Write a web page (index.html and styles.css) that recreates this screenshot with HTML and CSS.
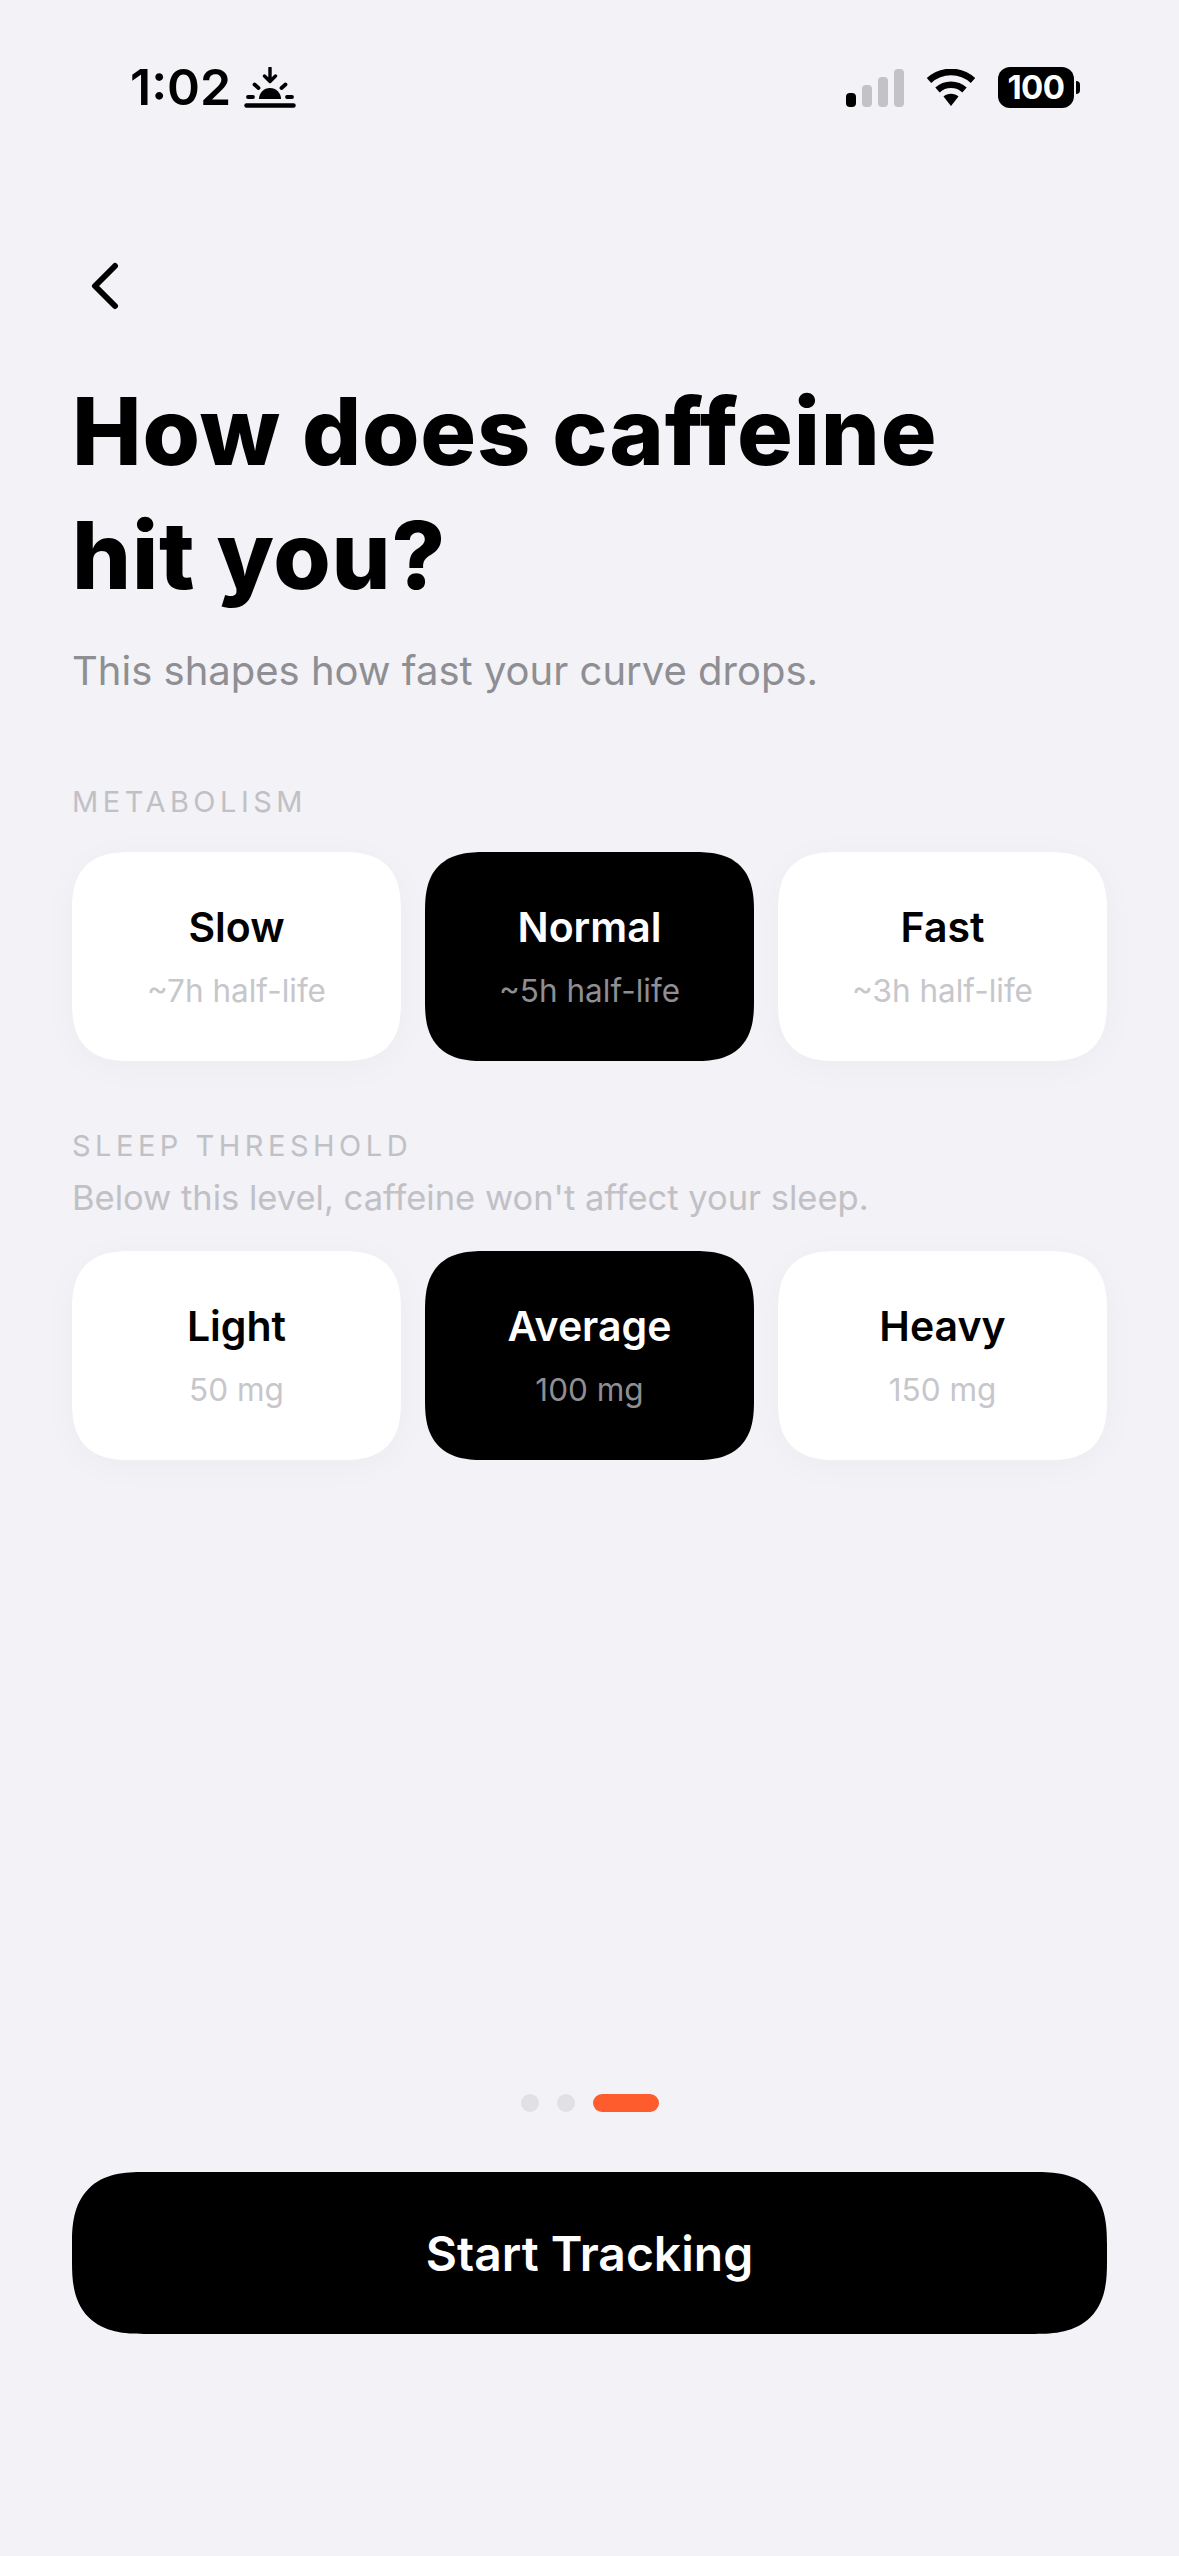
FILE: index.html
```html
<!DOCTYPE html>
<html lang="en">
<head>
<meta charset="utf-8">
<title>Caffeine setup</title>
<link rel="stylesheet" href="styles.css">
</head>
<body>
<main class="screen">
  <header class="status">
    <div class="status-left">
      <span class="time">1:02</span>
      <svg class="sunset" width="52" height="42" viewBox="0 0 52 42" aria-hidden="true">
        <path d="M26 1v13M20.500 9l5.500 5.500L31.500 9" fill="none" stroke="#000" stroke-width="3.400" stroke-linecap="round" stroke-linejoin="round"/>
        <path d="M15 32a11 11 0 0 1 22 0z" fill="#000"/>
        <path d="M10.500 17.500l4 3.500M41.500 17.500l-4 3.500M4 30h5M43 30h5" fill="none" stroke="#000" stroke-width="3.800" stroke-linecap="round"/>
        <path d="M2.500 38.500h47" fill="none" stroke="#000" stroke-width="4.500" stroke-linecap="round"/>
      </svg>
    </div>
    <div class="status-right">
      <svg width="58" height="38" viewBox="0 0 58 38" aria-hidden="true">
        <rect x="0" y="24" width="10" height="14" rx="4" fill="#000"/>
        <rect x="16" y="16" width="10" height="22" rx="4" fill="#c2c2c7"/>
        <rect x="32" y="8" width="10" height="30" rx="4" fill="#c2c2c7"/>
        <rect x="48" y="0" width="10" height="38" rx="4" fill="#c2c2c7"/>
      </svg>
      <svg class="wifi" width="50" height="37" viewBox="0 0 50 37" aria-hidden="true">
        <path d="M3 11.500C15.500 0 34.500 0 47 11.500" fill="none" stroke="#000" stroke-width="6.500"/>
        <path d="M11.500 21c7.500-7 19.500-7 27 0" fill="none" stroke="#000" stroke-width="6.500"/>
        <path d="M17.500 27.500c4-3.700 11-3.700 15 0L25 37z" fill="#000"/>
      </svg>
      <div class="battery">
        <span class="battery-body">100</span>
        <span class="battery-cap"></span>
      </div>
    </div>
  </header>

  <button class="back" aria-label="Back">
    <svg width="30" height="48" viewBox="0 0 30 48" aria-hidden="true">
      <path d="M25 4 5 24l20 20" fill="none" stroke="#000" stroke-width="6" stroke-linecap="round" stroke-linejoin="round"/>
    </svg>
  </button>

  <h1 class="title">How does caffeine<br>hit you?</h1>
  <p class="subtitle">This shapes how fast your curve drops.</p>

  <section class="group group-metabolism">
    <h2 class="label">METABOLISM</h2>
    <div class="options">
      <div class="card"><span class="card-name">Slow</span><span class="card-sub">~7h half-life</span></div>
      <div class="card selected"><span class="card-name">Normal</span><span class="card-sub">~5h half-life</span></div>
      <div class="card"><span class="card-name">Fast</span><span class="card-sub">~3h half-life</span></div>
    </div>
  </section>

  <section class="group group-sleep">
    <h2 class="label">SLEEP THRESHOLD</h2>
    <p class="hint">Below this level, caffeine won't affect your sleep.</p>
    <div class="options">
      <div class="card"><span class="card-name">Light</span><span class="card-sub">50 mg</span></div>
      <div class="card selected"><span class="card-name">Average</span><span class="card-sub">100 mg</span></div>
      <div class="card"><span class="card-name">Heavy</span><span class="card-sub">150 mg</span></div>
    </div>
  </section>

  <div class="spacer"></div>

  <div class="pager">
    <span class="dot"></span>
    <span class="dot"></span>
    <span class="dot active"></span>
  </div>

  <button class="cta">Start Tracking</button>
</main>
</body>
</html>
```

FILE: styles.css
```css
* { box-sizing: border-box; }

html, body {
  margin: 0;
  padding: 0;
  background: #f2f2f7;
}

.screen {
  width: 1179px;
  height: 2556px;
  padding: 0 72px 222px;
  display: flex;
  flex-direction: column;
  background: #f2f2f7;
  color: #000;
  font-family: Inter, "Liberation Sans", sans-serif;
  overflow: hidden;
}

.status {
  height: 176px;
  margin: 0 -72px;
  padding: 60px 99px 0 130px;
  display: flex;
  justify-content: space-between;
  align-items: flex-start;
}

.status-left {
  display: flex;
  align-items: center;
  gap: 13px;
}

.time {
  font-family: Inter, sans-serif;
  font-size: 50px;
  font-weight: 600;
  line-height: 54px;
}

.sunset { margin-top: 2px; }

.status-right {
  display: flex;
  align-items: center;
  gap: 22px;
  padding-top: 7px;
}

.battery {
  display: flex;
  align-items: center;
  gap: 2px;
}

.battery-body {
  width: 76px;
  height: 41px;
  border-radius: 12px;
  background: #000;
  color: #fff;
  font-size: 33px;
  font-weight: 700;
  line-height: 41px;
  text-align: center;
  letter-spacing: -0.5px;
}

.battery-cap {
  width: 4px;
  height: 13px;
  background: #000;
  border-radius: 0 6px 6px 0;
}

.back {
  width: 30px;
  height: 48px;
  margin: 86px 0 0 18px;
  padding: 0;
  border: 0;
  background: none;
  display: block;
  flex: none;
}

.title {
  margin: 59px 0 0;
  font-family: Inter, "Liberation Sans", sans-serif;
  font-size: 93px;
  font-weight: 800;
  line-height: 124px;
  letter-spacing: 0.800px;
}

.subtitle {
  margin: 27px 0 0;
  color: #8e8e93;
  font-size: 40px;
  line-height: 54px;
}

.group-metabolism { margin-top: 86px; }
.group-sleep { margin-top: 67px; }

.label {
  margin: 0;
  color: #c0c0c5;
  font-size: 29px;
  font-weight: 400;
  line-height: 36px;
  letter-spacing: 4.500px;
}

.hint {
  margin: 11px 0 0;
  color: #c0c0c5;
  font-size: 34.500px;
  line-height: 46px;
}

.options {
  margin-top: 32px;
  display: grid;
  grid-template-columns: repeat(3, 1fr);
  gap: 24px;
}

.group-sleep .options { margin-top: 30px; }

.card {
  height: 209px;
  padding-top: 50px;
  display: flex;
  flex-direction: column;
  align-items: center;
  background: #fff;
  border-radius: 60px;
  corner-shape: superellipse(1.4);
  box-shadow: 0 6px 36px rgba(0, 0, 0, 0.03);
}

.card.selected {
  background: #000;
  color: #fff;
  box-shadow: none;
}

.card-name {
  font-size: 41px;
  font-weight: 600;
  line-height: 50px;
}

.card-sub {
  margin-top: 19px;
  color: #c6c6cb;
  font-size: 31.500px;
  line-height: 40px;
}

.card.selected .card-sub { color: #8e8e93; }

.spacer { flex: 1; }

.pager {
  display: flex;
  justify-content: center;
  gap: 18px;
}

.dot {
  width: 18px;
  height: 18px;
  border-radius: 9px;
  background: #e0e0e5;
}

.dot.active {
  width: 66px;
  background: #ff5c2e;
}

.cta {
  height: 162px;
  margin-top: 60px;
  border: 0;
  border-radius: 72px;
  corner-shape: superellipse(1.4);
  background: #000;
  color: #fff;
  font-family: Inter, sans-serif;
  font-size: 48px;
  font-weight: 600;
  flex: none;
}
```
